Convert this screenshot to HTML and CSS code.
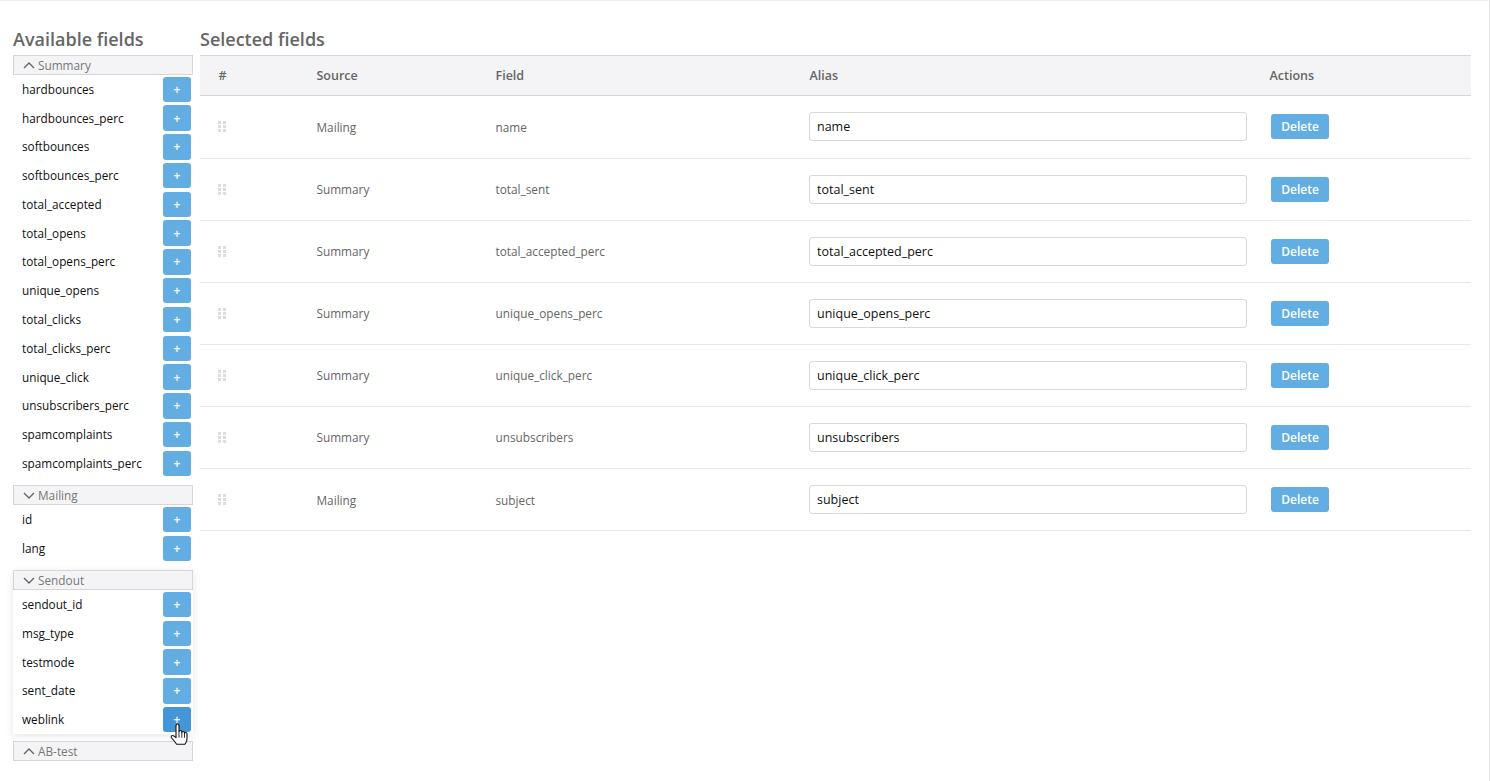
FILE: index.html
```html
<!DOCTYPE html>
<html lang="en">
<head>
<meta charset="utf-8">
<title>Fields</title>
<link rel="stylesheet" href="styles.css">
</head>
<body>
<div class="page">
  <aside class="available">
    <h2 class="title">Available fields</h2>
    <section class="group">
      <div class="group-head"><svg class="chev" viewBox="0 0 12 7"><path d="M1 6l5-5 5 5"/></svg>Summary</div>
      <div class="item"><span>hardbounces</span><button class="add">+</button></div>
      <div class="item"><span>hardbounces_perc</span><button class="add">+</button></div>
      <div class="item"><span>softbounces</span><button class="add">+</button></div>
      <div class="item"><span>softbounces_perc</span><button class="add">+</button></div>
      <div class="item"><span>total_accepted</span><button class="add">+</button></div>
      <div class="item"><span>total_opens</span><button class="add">+</button></div>
      <div class="item"><span>total_opens_perc</span><button class="add">+</button></div>
      <div class="item"><span>unique_opens</span><button class="add">+</button></div>
      <div class="item"><span>total_clicks</span><button class="add">+</button></div>
      <div class="item"><span>total_clicks_perc</span><button class="add">+</button></div>
      <div class="item"><span>unique_click</span><button class="add">+</button></div>
      <div class="item"><span>unsubscribers_perc</span><button class="add">+</button></div>
      <div class="item"><span>spamcomplaints</span><button class="add">+</button></div>
      <div class="item"><span>spamcomplaints_perc</span><button class="add">+</button></div>
    </section>
    <section class="group">
      <div class="group-head"><svg class="chev" viewBox="0 0 12 7"><path d="M1 1l5 5 5-5"/></svg>Mailing</div>
      <div class="item"><span>id</span><button class="add">+</button></div>
      <div class="item"><span>lang</span><button class="add">+</button></div>
    </section>
    <section class="group group-open">
      <div class="group-head"><svg class="chev" viewBox="0 0 12 7"><path d="M1 1l5 5 5-5"/></svg>Sendout</div>
      <div class="item"><span>sendout_id</span><button class="add">+</button></div>
      <div class="item"><span>msg_type</span><button class="add">+</button></div>
      <div class="item"><span>testmode</span><button class="add">+</button></div>
      <div class="item"><span>sent_date</span><button class="add">+</button></div>
      <div class="item"><span>weblink</span>
        <button class="add add-hover">+
          <svg class="cursor" viewBox="0 0 18 25" preserveAspectRatio="none"><path d="M6 12V3c0-2.400 3-2.400 3 0v6.500c0-1.800 2.800-1.800 2.800 0v1c0-1.800 2.700-1.800 2.700 0v1c0-1.600 2.500-1.600 2.500 .2v5.300c0 3-1.200 4.200-2 6H6.500c-1-2.200-3-4-5-7-1-1.600.6-3.200 2.200-2L6 16z" fill="#fff" stroke="#111" stroke-width="1.100" stroke-linejoin="round"/><path d="M9 10v6M11.800 10.500V16M14.500 11.500V16" stroke="#111" stroke-width=".9" fill="none"/></svg>
        </button>
      </div>
    </section>
    <section class="group">
      <div class="group-head"><svg class="chev" viewBox="0 0 12 7"><path d="M1 6l5-5 5 5"/></svg>AB-test</div>
    </section>
  </aside>
  <main class="selected">
    <h2 class="title">Selected fields</h2>
    <table class="fields">
      <colgroup><col class="c-num"><col class="c-src"><col class="c-field"><col class="c-alias"><col class="c-act"></colgroup>
      <thead><tr><th>#</th><th>Source</th><th>Field</th><th>Alias</th><th>Actions</th></tr></thead>
      <tbody>
        <tr><td><i class="grip"></i></td><td>Mailing</td><td>name</td><td><input class="alias" value="name"></td><td><button class="del">Delete</button></td></tr>
        <tr><td><i class="grip"></i></td><td>Summary</td><td>total_sent</td><td><input class="alias" value="total_sent"></td><td><button class="del">Delete</button></td></tr>
        <tr><td><i class="grip"></i></td><td>Summary</td><td>total_accepted_perc</td><td><input class="alias" value="total_accepted_perc"></td><td><button class="del">Delete</button></td></tr>
        <tr><td><i class="grip"></i></td><td>Summary</td><td>unique_opens_perc</td><td><input class="alias" value="unique_opens_perc"></td><td><button class="del">Delete</button></td></tr>
        <tr><td><i class="grip"></i></td><td>Summary</td><td>unique_click_perc</td><td><input class="alias" value="unique_click_perc"></td><td><button class="del">Delete</button></td></tr>
        <tr><td><i class="grip"></i></td><td>Summary</td><td>unsubscribers</td><td><input class="alias" value="unsubscribers"></td><td><button class="del">Delete</button></td></tr>
        <tr><td><i class="grip"></i></td><td>Mailing</td><td>subject</td><td><input class="alias" value="subject"></td><td><button class="del">Delete</button></td></tr>
      </tbody>
    </table>
  </main>
</div>
</body>
</html>
```
FILE: styles.css
```css
* { box-sizing: border-box; }
html, body { margin: 0; height: 100%; overflow: hidden; }
body { background: #fff; font-family: "Open Sans", sans-serif; color: #666; }
.page {
  display: flex;
  gap: 7px;
  height: 781px;
  padding: 1px 18px 0 13px;
  border-top: 1px solid #efefef;
  border-right: 1px solid #e4e4e4;
  width: 1490px;
}
.title {
  margin: 0;
  height: 53px;
  padding-top: 24px;
  font-size: 18px;
  line-height: 26px;
  font-weight: 600;
  color: #666;
}
.available { width: 180px; flex: none; }
.selected { flex: 1; min-width: 0; }
.group { margin-bottom: 7.500px; }
.group-head {
  display: flex;
  align-items: center;
  height: 20px;
  padding-left: 9px;
  background: #f4f4f6;
  border: 1px solid #d6d6d6;
  font-size: 11.800px;
  color: #777;
}
.chev { width: 12px; height: 7px; margin-right: 3px; fill: none; stroke: #666; stroke-width: 1.400; }
.group-open { box-shadow: 0 2px 8px rgba(0,0,0,.1); margin-bottom: 7px; }
.item {
  display: flex;
  align-items: center;
  justify-content: space-between;
  height: 28.770px;
  padding: 0 2px 0 9px;
  font-size: 11.750px;
  color: #111;
}
.item span { margin-top: -1px; }
.add {
  position: relative;
  width: 28px;
  height: 25.500px;
  padding: 0;
  border: 0;
  border-radius: 3px;
  background: #62aee2;
  color: #fff;
  font: 600 12px "Open Sans", sans-serif;
}
.add-hover { background: #4396d8; }
.cursor { position: absolute; left: 7px; top: 16px; width: 18px; height: 23px; }
.fields { width: 100%; table-layout: fixed; border-collapse: collapse; }
.c-num { width: 98px; }
.c-src { width: 179px; }
.c-field { width: 314px; }
.c-alias { width: 460px; }
.fields th {
  height: 40.450px;
  padding: 0 0 0 18.500px;
  text-align: left;
  font-size: 12.500px;
  font-weight: 600;
  color: #666;
  background: #f4f4f6;
  border-top: 1px solid #d6d6d6;
  border-bottom: 1px solid #d6d6d6;
}
.fields td {
  height: 62.100px;
  padding: 0 0 0 18.500px;
  font-size: 11.800px;
  color: #666;
  border-bottom: 1px solid #e8e8e8;
}
.grip {
  display: block;
  width: 8px;
  height: 11px;
  margin-left: -0.500px;
  background: repeating-linear-gradient(to right, #ddd 0 3px, transparent 3px 5px);
  -webkit-mask: repeating-linear-gradient(to bottom, #000 0 3px, transparent 3px 4px);
  mask: repeating-linear-gradient(to bottom, #000 0 3px, transparent 3px 4px);
}
.alias {
  display: block;
  width: 438px;
  height: 29px;
  margin-left: -0.500px;
  padding: 0 7px;
  border: 1px solid #d8d8d8;
  border-radius: 3px;
  font: 12.500px "Open Sans", sans-serif;
  color: #111;
  background: #fff;
}
.del {
  display: block;
  width: 58px;
  height: 25px;
  margin-left: 1.500px;
  padding: 0;
  border: 0;
  border-radius: 3px;
  background: #62aee2;
  color: #fff;
  font: 600 12px "Open Sans", sans-serif;
}
```
